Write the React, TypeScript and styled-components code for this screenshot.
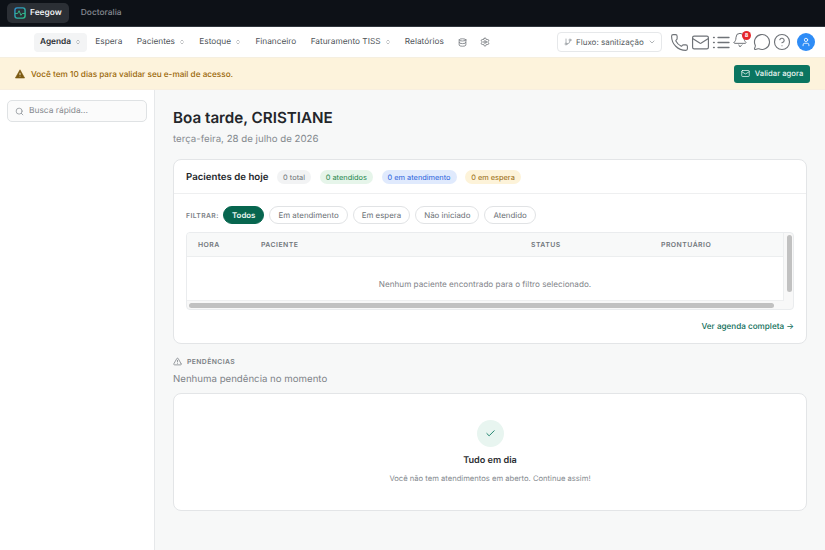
import React from "react";
import styled, { createGlobalStyle } from "styled-components";
import { AlertTriangle, Check, ChevronDown, ChevronsUpDown, Database, GitBranch, HelpCircle, Mail, MessageCircle, Phone, Search, Settings, Bell, User } from "lucide-react";

const Global = createGlobalStyle`
  html, body { margin: 0; padding: 0; }
  body { font-family: Inter, "Liberation Sans", sans-serif; background: #f7f8f8; overflow: hidden; text-rendering: geometricPrecision; }
  * { box-sizing: border-box; }
`;
const Page = styled.div`width: 825px; height: 550px; display: flex; flex-direction: column; overflow: hidden;`;
const TopBar = styled.div`height: 27px; flex: none; background: #0d1117; border-bottom: 1px solid #30363d; display: flex; align-items: center; padding: 0 0 0 7px; gap: 4px;`;
const Tab = styled.div<{ $on?: boolean }>`
  height: 20px; padding: 0 7px 0 ${p => p.$on ? 7 : 8}px; display: flex; align-items: center; gap: 4px; border-radius: 5px;
  font-size: 8.4px; font-weight: ${p => p.$on ? 600 : 500}; color: ${p => p.$on ? "#eef0f2" : "#858991"};
  background: ${p => p.$on ? "#2b2f35" : "transparent"};
`;
const Nav = styled.nav`height: 31px; flex: none; background: #fff; display: flex; align-items: center; padding: 0 10px 0 34px; border-bottom: 1px solid #f5efe0;`;
const NavItem = styled.div<{ $on?: boolean; $w?: number }>`
  height: 19px; display: flex; align-items: center; gap: 4px; padding: 0 6px; border-radius: 4px; white-space: nowrap;
  font-size: 8.3px; font-weight: ${p => p.$on ? 600 : 400}; color: ${p => p.$on ? "#2b2f33" : "#4e5358"};
  background: ${p => p.$on ? "#f3f4f5" : "transparent"};
  margin-right: ${p => p.$w ?? 2.3}px;
  svg { color: #6b7075; }
`;
const Flow = styled.div`
  margin-left: auto; width: 105px; height: 20px; border: 1px solid #e6e8ea; border-radius: 4px; display: flex; align-items: center; gap: 4px; padding: 0 6px;
  font-size: 8px; color: #565b60; margin-right: 8px; svg { color: #8a8f94; flex: none; } span { flex: 1; white-space: nowrap; }
`;
const Icons = styled.div`display: flex; align-items: center; color: #6f7378; gap: 2px;`;
const BellWrap = styled.div`position: relative; width: 19px; height: 20px; display: flex; align-items: flex-start; margin-left: -1px;`;
const Badge = styled.div`position: absolute; top: -1px; right: 0; width: 9px; height: 9px; border-radius: 50%; background: #e5262b; color: #fff; font-size: 5.5px; font-weight: 700; display: flex; align-items: center; justify-content: center;`;
const Tail = styled.div`position: absolute; bottom: -1px; left: 5px;`;
const Avatar = styled.div`width: 18px; height: 18px; border-radius: 50%; background: #2e8cf6; color: #fff; display: flex; align-items: center; justify-content: center; margin-left: 4px;`;
const Banner = styled.div`height: 32px; flex: none; background: #fdf3dc; border-bottom: 1px solid #f8efdf; display: flex; align-items: center; padding: 0 15px; gap: 6px; font-size: 8.2px; font-weight: 500; color: #9a6708; svg { flex: none; }`;
const BannerButton = styled.div`margin-left: auto; width: 76px; height: 18px; border-radius: 3px; background: #0b7560; color: #eaf6f2; font-size: 7.7px; font-weight: 500; display: flex; align-items: center; justify-content: center; gap: 5px;`;
const Body = styled.div`flex: 1; display: flex; min-height: 0;`;
const Side = styled.aside`width: 155px; flex: none; background: #fff; border-right: 1px solid #e6e8ea; padding: 10px 7px;`;
const SearchBox = styled.div`height: 22px; border: 1px solid #dfe2e4; border-radius: 5px; background: #fbfbfb; display: flex; align-items: center; gap: 5px; padding: 0 6px 0 7px; font-size: 8.4px; color: #85898e; svg { color: #8a8f94; flex: none; }`;
const Main = styled.main`flex: 1; padding: 16px 18px 0; min-width: 0;`;
const Title = styled.h1`margin: 0; font-size: 15.2px; line-height: 24px; font-weight: 600; color: #23262a;`;
const Sub = styled.p`margin: 3px 0 0; font-size: 9.7px; line-height: 14px; color: #868b90;`;
const Card = styled.section`margin-top: 12px; background: #fff; border: 1px solid #e3e5e7; border-radius: 8px; height: 185px; display: flex; flex-direction: column;`;
const CardHead = styled.div`height: 34px; flex: none; display: flex; align-items: center; padding: 1px 12px 0; gap: 8.7px; border-bottom: 1px solid #eeeff0;`;
const CardTitle = styled.h2`margin: 0; font-size: 9.67px; font-weight: 600; color: #24272b;`;
const Pill = styled.span<{ $bg: string; $fg: string }>`height: 13.5px; padding: 0 6px; border-radius: 7px; font-size: 7.4px; display: flex; align-items: center; background: ${p => p.$bg}; color: ${p => p.$fg}; white-space: nowrap;`;
const Filters = styled.div`display: flex; align-items: center; gap: 5px; padding: 12px 12px 0;`;
const FilterLabel = styled.span`font-size: 6.8px; font-weight: 600; letter-spacing: .4px; color: #7c8186; width: 32px; white-space: nowrap;`;
const Chip = styled.span<{ $on?: boolean }>`height: 18px; padding: 0 8px; border-radius: 9px; font-size: 7.9px; display: flex; align-items: center; white-space: nowrap;
  font-weight: ${p => p.$on ? 600 : 400};
  background: ${p => p.$on ? "#07664f" : "#fff"}; color: ${p => p.$on ? "#e9f5f1" : "#6a6f74"}; border: 1px solid ${p => p.$on ? "#07664f" : "#e1e3e5"};`;
const TableWrap = styled.div`position: relative; margin: 8px 12px 0; height: 78px; border: 1px solid #eaecee; border-radius: 4px; overflow: hidden; background: #f8f8f8;`;
const HeadRow = styled.div`height: 24px; padding-bottom: 1px; background: #f8f9f9; border-bottom: 1px solid #eceeef; border-right: 1px solid #eceeef; margin-right: 9px; display: grid; grid-template-columns: 63px 270px 130px 1fr; align-items: center; padding-left: 11px;
  font-size: 6.9px; font-weight: 600; letter-spacing: .45px; color: #72777c;`;
const Empty = styled.div`height: 44px; background: #fff; margin-right: 9px; display: flex; align-items: center; justify-content: center; font-size: 8.17px; color: #7f8489; padding-top: 10px; border-bottom: 1px solid #eeeff0; border-right: 1px solid #eceeef;`;
const VBar = styled.div`position: absolute; top: 2px; right: 1px; width: 5px; height: 57px; border-radius: 3px; background: #c1c1c1;`;
const HBar = styled.div`position: absolute; bottom: 1px; left: 2px; width: 585px; height: 5px; border-radius: 3px; background: #c1c1c1;`;
const Foot = styled.div`padding: 11px 12px 0; text-align: right; font-size: 8.15px; line-height: 11px; font-weight: 500; color: #0f6e59;`;
const SecHead = styled.div`margin-top: 13px; display: flex; align-items: center; gap: 5px; font-size: 6.8px; font-weight: 600; letter-spacing: .4px; color: #7a7f84; svg { color: #7a7f84; }`;
const SecNote = styled.p`margin: 7px 0 0; font-size: 9.67px; line-height: 14px; color: #7e8388;`;
const OkCard = styled.section`margin-top: 6px; height: 118px; background: #fff; border: 1px solid #e3e5e7; border-radius: 8px; display: flex; flex-direction: column; align-items: center; padding-top: 26px;`;
const OkDot = styled.div`width: 27px; height: 27px; border-radius: 50%; background: #e8f5f0; color: #0f7a62; display: flex; align-items: center; justify-content: center;`;
const OkTitle = styled.h3`margin: 7px 0 0; font-size: 9.15px; line-height: 14px; font-weight: 600; color: #2a2d31;`;
const OkText = styled.p`margin: 5px 0 0; font-size: 7.64px; line-height: 12px; color: #868b90;`;

const Logo = () => (
  <svg width="12" height="12" viewBox="0 0 13 13" fill="none">
    <defs>
      <linearGradient id="lg" x1="0" y1="0" x2="1" y2="1">
        <stop offset="0" stopColor="#2f8fd0" />
        <stop offset="1" stopColor="#2cc48a" />
      </linearGradient>
    </defs>
    <rect x="1" y="1" width="11" height="11" rx="2.4" stroke="url(#lg)" strokeWidth="1.5" />
    <path d="M1 7h3l1.5-3 2 5L9 7h3" stroke="#35c08f" strokeWidth="1" />
  </svg>
);
const DottedList = () => (
  <svg width="19" height="19" viewBox="0 0 19 19" fill="none" stroke="currentColor" strokeWidth="1.3" strokeLinecap="round">
    <path d="M6 4.5h11M6 9.5h11M6 14.5h11" />
    <path d="M1.6 4.5h.6M1.6 9.5h.6M1.6 14.5h.6" strokeWidth="1.5" />
  </svg>
);
const WarnFill = () => (
  <svg width="10" height="10" viewBox="0 0 10 10">
    <path d="M5 .8.4 9h9.2z" fill="#7c5a12" stroke="#7c5a12" strokeWidth=".6" strokeLinejoin="round" />
    <path d="M5 3.8v2.4M5 7.2v.5" stroke="#fdf3dc" strokeWidth=".9" />
  </svg>
);
const caret = <ChevronsUpDown size={6} strokeWidth={1.8} />;

export default function App() {
  return (
    <Page>
      <Global />
      <TopBar>
        <Tab $on><Logo />Feegow</Tab>
        <Tab>Doctoralia</Tab>
      </TopBar>
      <Nav>
        <NavItem $on>Agenda {caret}</NavItem>
        <NavItem>Espera</NavItem>
        <NavItem>Pacientes {caret}</NavItem>
        <NavItem>Estoque {caret}</NavItem>
        <NavItem>Financeiro</NavItem>
        <NavItem>Faturamento TISS {caret}</NavItem>
        <NavItem>Relatórios</NavItem>
        <NavItem $w={1}><Database size={9} /></NavItem>
        <NavItem><Settings size={10} /></NavItem>
        <Flow><GitBranch size={8} /><span>Fluxo: sanitização</span><ChevronDown size={8} /></Flow>
        <Icons>
          <Phone size={19} strokeWidth={1.4} />
          <Mail size={19} strokeWidth={1.5} />
          <DottedList />
          <BellWrap>
            <Bell size={16} strokeWidth={1.5} />
            <Tail><ChevronDown size={7} strokeWidth={2} /></Tail>
            <Badge>8</Badge>
          </BellWrap>
          <MessageCircle size={18} strokeWidth={1.5} />
          <HelpCircle size={18} strokeWidth={1.5} />
          <Avatar><User size={10} /></Avatar>
        </Icons>
      </Nav>
      <Banner>
        <WarnFill />
        Você tem 10 dias para validar seu e-mail de acesso.
        <BannerButton><Mail size={9} />Validar agora</BannerButton>
      </Banner>
      <Body>
        <Side>
          <SearchBox><Search size={9} />Busca rápida...</SearchBox>
        </Side>
        <Main>
          <Title>Boa tarde, CRISTIANE</Title>
          <Sub>terça-feira, 28 de julho de 2026</Sub>
          <Card>
            <CardHead>
              <CardTitle>Pacientes de hoje</CardTitle>
              <Pill $bg="#f2f3f4" $fg="#6c7176">0 total</Pill>
              <Pill $bg="#e6f5ea" $fg="#23864a">0 atendidos</Pill>
              <Pill $bg="#e0eafd" $fg="#2a62dc">0 em atendimento</Pill>
              <Pill $bg="#fdf3d9" $fg="#95670c">0 em espera</Pill>
            </CardHead>
            <Filters>
              <FilterLabel>FILTRAR:</FilterLabel>
              <Chip $on>Todos</Chip>
              <Chip>Em atendimento</Chip>
              <Chip>Em espera</Chip>
              <Chip>Não iniciado</Chip>
              <Chip>Atendido</Chip>
            </Filters>
            <TableWrap>
              <HeadRow><span>HORA</span><span>PACIENTE</span><span>STATUS</span><span>PRONTUÁRIO</span></HeadRow>
              <Empty>Nenhum paciente encontrado para o filtro selecionado.</Empty>
              <VBar /><HBar />
            </TableWrap>
            <Foot>Ver agenda completa →</Foot>
          </Card>
          <SecHead><AlertTriangle size={9} />PENDÊNCIAS</SecHead>
          <SecNote>Nenhuma pendência no momento</SecNote>
          <OkCard>
            <OkDot><Check size={11} strokeWidth={2} /></OkDot>
            <OkTitle>Tudo em dia</OkTitle>
            <OkText>Você não tem atendimentos em aberto. Continue assim!</OkText>
          </OkCard>
        </Main>
      </Body>
    </Page>
  );
}
